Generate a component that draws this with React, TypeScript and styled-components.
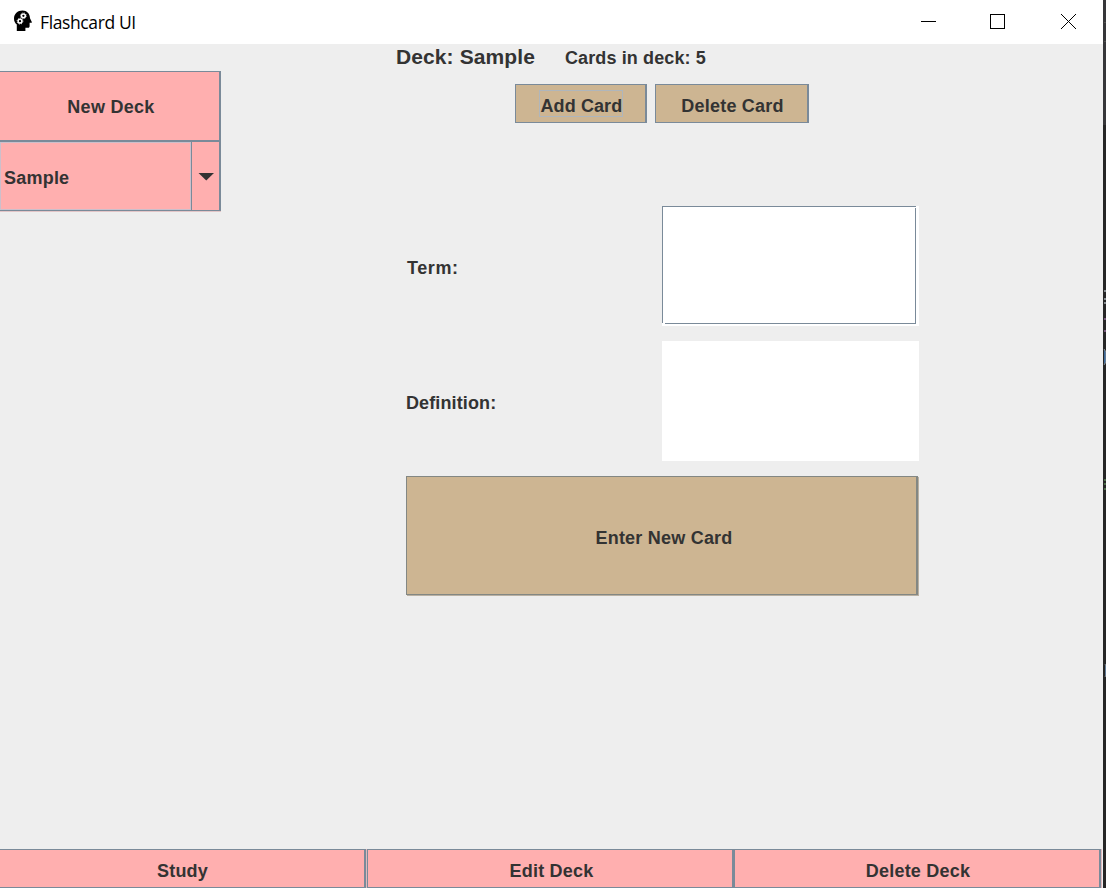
import React from "react";
import styled, { createGlobalStyle, css } from "styled-components";

const GlobalStyle = createGlobalStyle`
  * { box-sizing: border-box; }
  body { margin: 0; background: #eeeeee; overflow: hidden; }
  button { font: inherit; color: inherit; margin: 0; padding: 0; border-radius: 0; }
`;

const edge = "#7a8a99";
const pink = "#ffafaf";
const tan = "#cdb592";

const Desktop = styled.div`
  display: flex;
  width: 1106px;
  height: 888px;
  background: #262626;
`;

const Window = styled.div`
  display: flex;
  flex-direction: column;
  width: 1103px;
  background: #eeeeee;
  color: #333333;
  font: bold 18px/20px "Liberation Sans", Arial, sans-serif;
  letter-spacing: 0.22px;
`;

const TitleBar = styled.header`
  display: flex;
  align-items: center;
  height: 44px;
  padding-left: 13px;
  background: #ffffff;
  color: #000000;
`;

const AppIcon = styled.svg`
  width: 20px;
  height: 22px;
  margin: -2px 7px 0 0;
`;

const Title = styled.span`
  flex: 1;
  padding-bottom: 1px;
  font: 400 17.5px/24px "Open Sans", "Segoe UI", sans-serif;
  letter-spacing: -0.38px;
`;

const WindowControls = styled.svg`
  width: 206px;
  height: 44px;
  margin-right: -3px;
`;

const Body = styled.main`
  display: flex;
  height: 805px;
`;

const Sidebar = styled.aside`
  width: 221px;
  padding-top: 27px;
`;

const Content = styled.section`
  display: flex;
  flex-direction: column;
  align-items: center;
  width: 882px;
`;

const MetalButton = styled.button<{ $tone: string; $w: number; $h: number; $shade?: string }>`
  display: flex;
  align-items: center;
  justify-content: center;
  width: ${(p) => p.$w}px;
  height: ${(p) => p.$h}px;
  background: ${(p) => p.$tone};
  border: 1px solid ${edge};
  border-right-width: 2px;
  letter-spacing: inherit;
  ${(p) =>
    p.$shade &&
    css`
      border-color: #838783;
      box-shadow: 1px 1px 0 ${p.$shade};
    `}
`;

const NewDeckButton = styled(MetalButton)`
  border-left: 0;
  border-bottom-width: 2px;
  padding: 1px 0 0 3px;
  letter-spacing: 0.28px;
`;

const DeckSelect = styled.div`
  display: flex;
  width: 221px;
  height: 69px;
  background: ${pink};
  border: solid ${edge};
  border-width: 0 2px 1px 0;
  box-shadow: 0 1px 0 #e3c6c8;
`;

const DeckValue = styled.div`
  display: flex;
  align-items: center;
  width: 191px;
  padding: 3px 0 0 3px;
  border: 1px solid #ccbfcb;
`;

const DeckArrow = styled.div`
  display: flex;
  align-items: center;
  justify-content: center;
  flex: 1;
  padding: 1px 0 0 1px;
  border-left: 1px solid ${edge};
`;

const DeckHeader = styled.div`
  display: flex;
  align-self: flex-start;
  align-items: baseline;
  gap: 30px;
  height: 40px;
  padding: 1px 0 0 175px;
  white-space: nowrap;
`;

const DeckName = styled.span`
  font-size: 21px;
  line-height: 24px;
  letter-spacing: 0.1px;
`;

const CardCount = styled.span`
  letter-spacing: 0.12px;
`;

const ActionRow = styled.div`
  display: flex;
  gap: 8px;
  height: 39px;
`;

const FocusRing = styled.span`
  width: 84px;
  height: 27px;
  padding: 5px 0 0 1px;
  border: 1px solid #afb6bc;
  letter-spacing: 0.1px;
  white-space: nowrap;
`;

const ButtonLabel = styled.span<{ $top?: number; $left?: number }>`
  padding: ${(p) => p.$top ?? 0}px 0 0 ${(p) => p.$left ?? 0}px;
`;

const CardForm = styled.form`
  display: grid;
  grid-template-columns: 256px 257px;
  grid-template-rows: 120px 120px 120px;
  row-gap: 15px;
  margin-top: 83px;
  margin-left: 1px;
`;

const FieldLabel = styled.label<{ $indent?: number; $spacing: number }>`
  align-self: center;
  padding: 3px 0 0 ${(p) => p.$indent ?? 0}px;
  letter-spacing: ${(p) => p.$spacing}px;
`;

const TextField = styled.div`
  background: #ffffff;
`;

const ActiveOutline = styled.div`
  position: relative;
  width: 254px;
  height: 118px;
  border: 1px solid ${edge};
  &::before, &::after {
    content: "";
    position: absolute;
    background: #ffffff;
  }
  &::before { left: -1px; bottom: -1px; width: 3px; height: 1px; }
  &::after { right: -1px; top: 0; width: 1px; height: 1px; }
`;

const EnterButton = styled(MetalButton)`
  grid-column: 1 / 3;
`;

const Footer = styled.footer`
  display: flex;
  height: 39px;
`;

const FooterButton = styled(MetalButton)<{ $first?: boolean }>`
  box-shadow: 1px 0 0 #dfb9bd;
  ${(p) => p.$first && css`border-left: 0; margin-right: 1px;`}
`;

const Backdrop = styled.svg`
  width: 3px;
  height: 888px;
`;

export default function App() {
  return (
    <>
      <GlobalStyle />
      <Desktop>
        <Window>
          <TitleBar>
            <AppIcon viewBox="0 0 20 22">
              <path
                d="M9.5.5C4.6.5 1 3.8 1 8.4c0 2.7 1.1 4.7 2.8 6.2V21h8.6v-3.3h2.8c.9 0 1.4-.6 1.4-1.5v-3.4h1.9c.4 0 .5-.4.3-.8L17 8.3C17 3.8 13.8.5 9.5.5Z"
                fill="#000"
              />
              <g fill="none" stroke="#fff">
                <circle cx="10.4" cy="5.8" r="1.9" strokeWidth="1.5" />
                <circle cx="10.4" cy="5.8" r="2.9" strokeWidth=".8" strokeDasharray="1.1 1.18" />
                <circle cx="7" cy="11.2" r="1.9" strokeWidth="1.5" />
                <circle cx="7" cy="11.2" r="2.9" strokeWidth=".8" strokeDasharray="1.1 1.18" />
              </g>
            </AppIcon>
            <Title>Flashcard UI</Title>
            <WindowControls viewBox="0 0 206 44" fill="none" stroke="#000">
              <path d="M21 21.5h15" />
              <rect x="90.5" y="14.5" width="14" height="14" />
              <path d="M161 14l15 15M176 14l-15 15" />
            </WindowControls>
          </TitleBar>
          <Body>
            <Sidebar>
              <NewDeckButton $tone={pink} $w={221} $h={71}>
                New Deck
              </NewDeckButton>
              <DeckSelect>
                <DeckValue>Sample</DeckValue>
                <DeckArrow>
                  <svg width="16" height="8" viewBox="0 0 16 8">
                    <path d="M.5 0h15.5L8.25 7.5Z" fill="#333" />
                  </svg>
                </DeckArrow>
              </DeckSelect>
            </Sidebar>
            <Content>
              <DeckHeader>
                <DeckName>Deck: Sample</DeckName>
                <CardCount>Cards in deck: 5</CardCount>
              </DeckHeader>
              <ActionRow>
                <MetalButton $tone={tan} $w={132} $h={39}>
                  <FocusRing>Add Card</FocusRing>
                </MetalButton>
                <MetalButton $tone={tan} $w={154} $h={39}>
                  <ButtonLabel $top={4} $left={2}>Delete Card</ButtonLabel>
                </MetalButton>
              </ActionRow>
              <CardForm onSubmit={(e) => e.preventDefault()}>
                <FieldLabel $indent={1} $spacing={0.6}>Term:</FieldLabel>
                <TextField>
                  <ActiveOutline />
                </TextField>
                <FieldLabel $spacing={0.12}>Definition:</FieldLabel>
                <TextField />
                <EnterButton $tone={tan} $w={512} $h={119} $shade="#b9b0a2">
                  <ButtonLabel $top={4} $left={5}>Enter New Card</ButtonLabel>
                </EnterButton>
              </CardForm>
            </Content>
          </Body>
          <Footer>
            <FooterButton $tone={pink} $w={366} $h={39} $first>
              <ButtonLabel $top={4} $left={1}>Study</ButtonLabel>
            </FooterButton>
            <FooterButton $tone={pink} $w={367} $h={39}>
              <ButtonLabel $top={4} $left={3}>Edit Deck</ButtonLabel>
            </FooterButton>
            <FooterButton $tone={pink} $w={367} $h={39}>
              <ButtonLabel $top={4} $left={2}>Delete Deck</ButtonLabel>
            </FooterButton>
          </Footer>
        </Window>
        <Backdrop viewBox="0 0 3 888">
          <rect width="3" height="125" fill="#37373a" />
          <path d="M1 22.5h2M1 41.5h2" stroke="#505050" />
          <path d="M1 291h2M1 299h2M1 303h2" stroke="#858b90" strokeWidth="2" />
          <path d="M1 319h2M1 331h2" stroke="#76577a" strokeWidth="2" />
          <path d="M1 349l2 3v10l-2 3M2 664l1 2v9l-1 2" stroke="#858b90" fill="#3f6a9a" />
          <path d="M1 480h2M1 484h2M1 489h2" stroke="#4c6c49" strokeWidth="2" />
        </Backdrop>
      </Desktop>
    </>
  );
}
